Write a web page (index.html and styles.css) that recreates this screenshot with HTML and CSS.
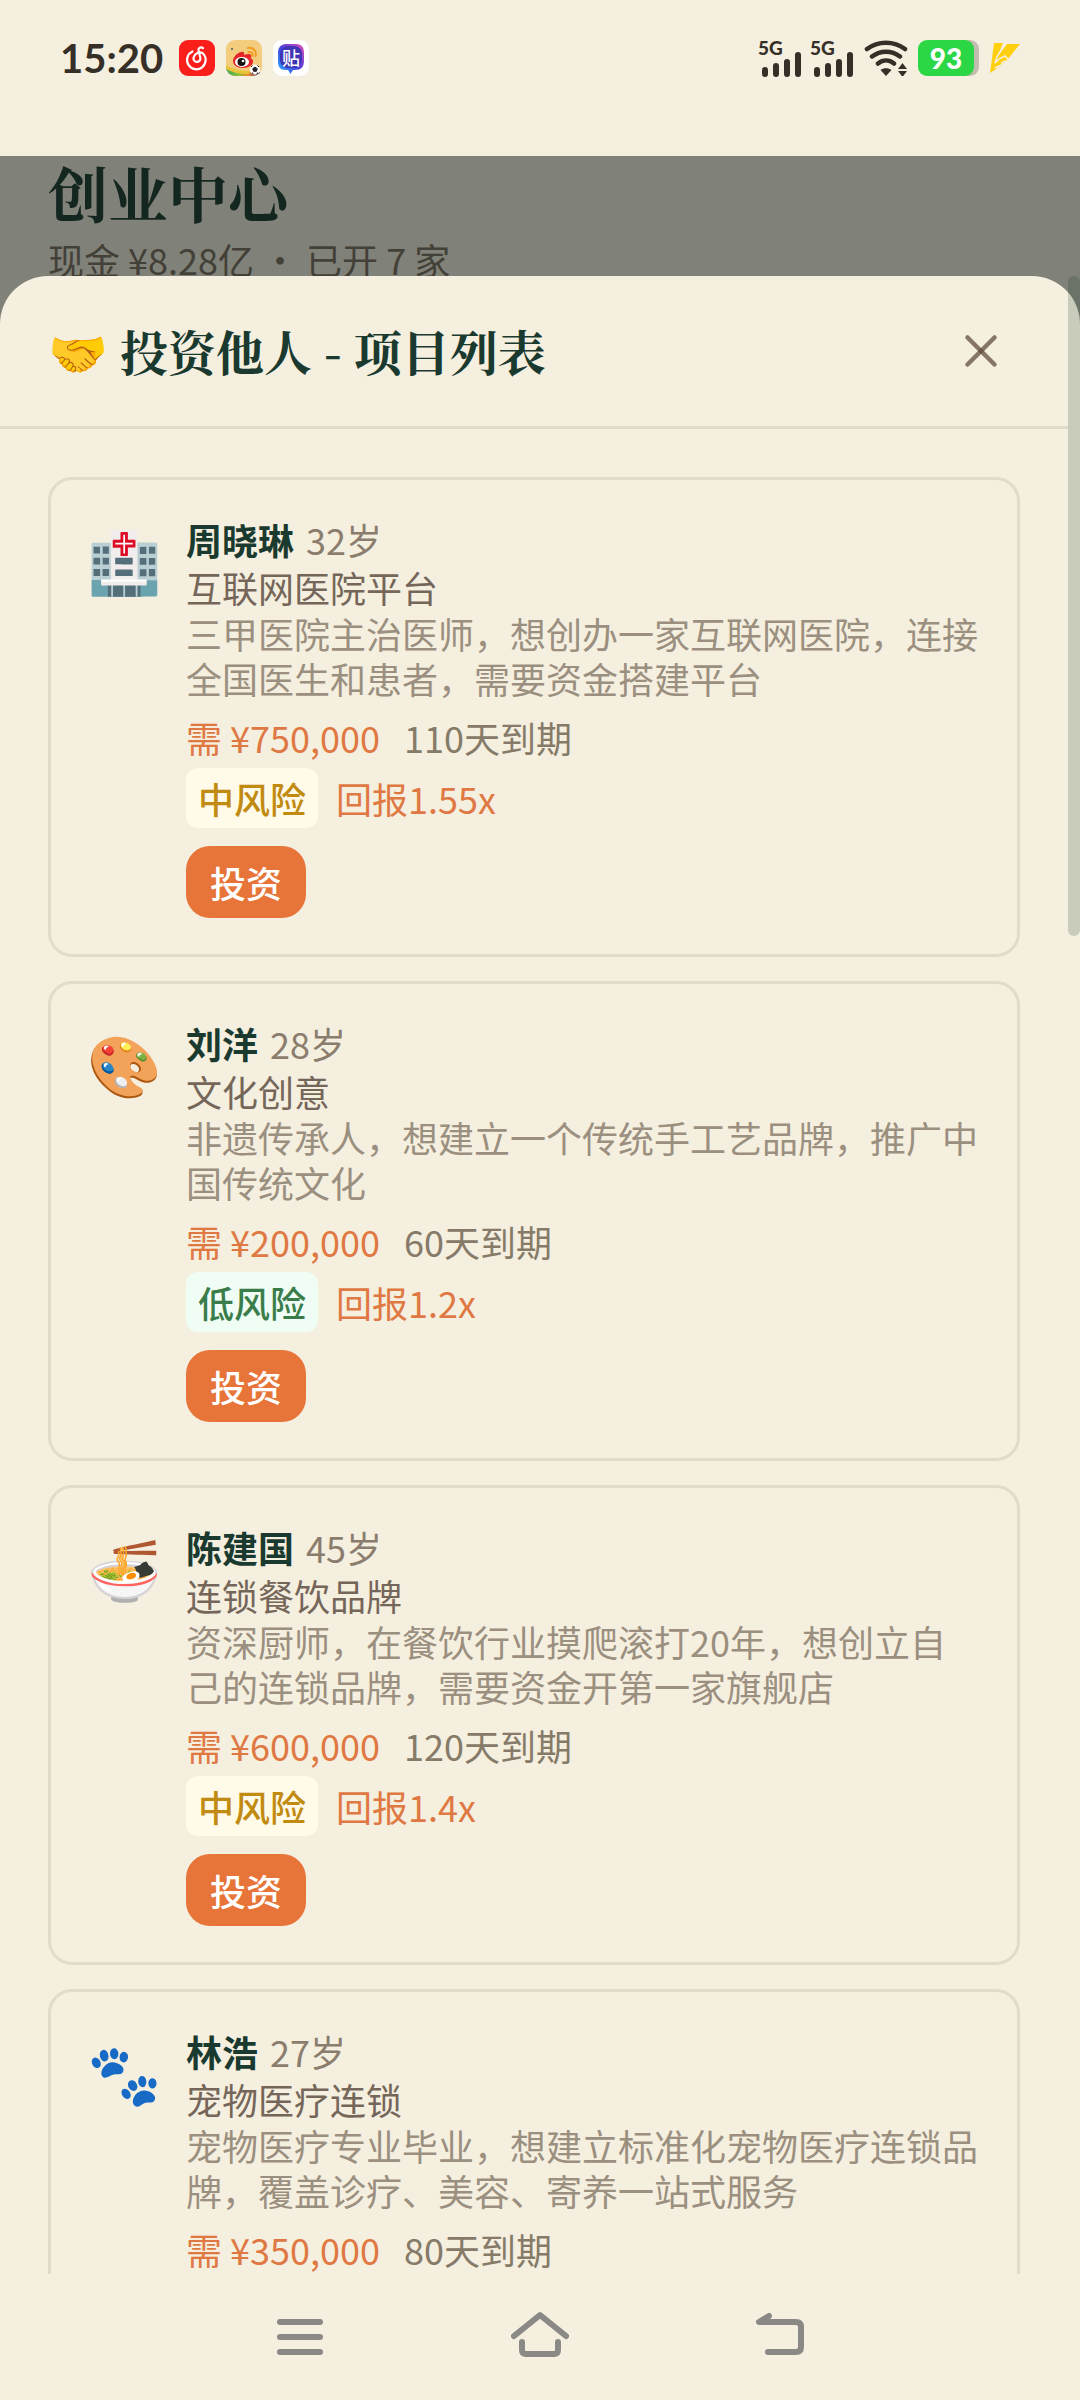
FILE: index.html
```html
<!DOCTYPE html>
<html lang="zh-CN">
<head>
    <meta charset="UTF-8">
    <meta name="viewport" content="width=device-width, initial-scale=1.0">
    <title>创业中心</title>
    <link rel="stylesheet" href="styles.css">
</head>
<body>
    <div class="status-bar">
        <div class="status-left">
            <span class="clock">15:20</span>
            <svg class="app-icon" viewBox="0 0 36 36">
                <rect width="36" height="36" rx="9" fill="#fb1f1c"/>
                <path d="M13.500 11.500A9.300 9.300 0 1 0 23.500 13C21 11.500 16.500 12.500 15 16.500A3.500 3.500 0 1 0 21.300 17.500L19.500 10.500C19 8 22 6.500 24 8.200" fill="none" stroke="#fff" stroke-width="2.200" stroke-linecap="round" stroke-linejoin="round"/>
            </svg>
            <svg class="app-icon" viewBox="0 0 36 36">
                <defs>
                    <clipPath id="weiboClip"><rect width="36" height="36" rx="9"/></clipPath>
                    <linearGradient id="weiboRainbow"><stop offset="0" stop-color="#3aa55b"/><stop offset=".35" stop-color="#8bbf3c"/><stop offset=".6" stop-color="#f08b2b"/><stop offset="1" stop-color="#3a2f86"/></linearGradient>
                </defs>
                <g clip-path="url(#weiboClip)">
                    <rect width="36" height="36" fill="#f4cc7d"/>
                    <path d="M0 27c7 4 16 6 36 5v5H0z" fill="url(#weiboRainbow)"/>
                    <path d="M0 25c7 5 15 6 24 6l-1 3C13 34 5 32 0 29z" fill="#e9c437"/>
                </g>
                <path d="M7 21c0-5 7-10 10-9 2 .500 1 3 1 3s5-2.500 7 0c1 1.500-.500 3-.500 3s3 1 2.500 4c-.500 4-6 6-10.500 6C11 28 7 25 7 21z" fill="#e6262a"/>
                <ellipse cx="16" cy="22" rx="7" ry="5" fill="#fff"/>
                <circle cx="15.500" cy="22" r="4" fill="#15110f"/>
                <circle cx="17" cy="21" r="1.300" fill="#fff"/>
                <circle cx="6" cy="9" r="1" fill="#4b5a7c"/>
                <path d="M22 8c5-1 9 3 7.500 8M22.500 12c2.500-.500 4.500 1 3.800 4" fill="none" stroke="#f39a22" stroke-width="2" stroke-linecap="round"/>
                <circle cx="29" cy="29.500" r="5" fill="#fff"/>
                <path d="M29 27l2.300 1.700-.900 2.600h-2.800l-.900-2.600zM25 27l1.500-1.500M33 27l-1.500-1.500M27 34l-.500-1.500M31 34l.500-1.500" fill="#222" stroke="#222" stroke-width="1"/>
            </svg>
            <span class="app-icon tieba">
                <svg viewBox="0 0 36 36">
                    <defs><linearGradient id="tiebaRing" x1="0" y1="1" x2="1" y2="0"><stop offset="0" stop-color="#22b5ff"/><stop offset=".5" stop-color="#4a3fe0"/><stop offset="1" stop-color="#e64fb4"/></linearGradient></defs>
                    <rect width="36" height="36" rx="9" fill="#fff"/>
                    <path d="M13 4h10c6 0 8 3.500 8 9v8c0 6-3 9-9 9h-2l-2.500 4-2.500-4h-2c-6 0-8-3-8-9v-8c0-5.500 3-9 8-9z" fill="url(#tiebaRing)"/>
                    <rect x="7" y="6" width="22" height="22" rx="8" fill="#3f36b5"/>
                </svg>
                <span class="tieba-text">贴</span>
            </span>
        </div>
        <div class="status-right">
            <div class="signal">
                <span class="signal-type">5G</span>
                <svg viewBox="0 0 42 26"><path d="M5 19v4M16 15v8M27 11v12M38 4v19" stroke="#352f28" stroke-width="6" stroke-linecap="round"/></svg>
            </div>
            <div class="signal">
                <span class="signal-type">5G</span>
                <svg viewBox="0 0 42 26"><path d="M5 19v4M16 15v8M27 11v12M38 4v19" stroke="#352f28" stroke-width="6" stroke-linecap="round"/></svg>
            </div>
            <svg class="wifi" viewBox="0 0 44 36">
                <path d="M3 9C14 0.500 30 0.500 41 9M8 16.500c8.500-6.500 19.500-6.500 28 0M14 23.500c5-4 11-4 16 0" fill="none" stroke="#352f28" stroke-width="4.500" stroke-linecap="round"/>
                <path d="M16.500 30c3-2.500 8-2.500 11 0L22 36zM34 29l4.500-6 4.500 6zM34 31h9l-4.500 6z" fill="#352f28"/>
            </svg>
            <div class="battery"><span>93</span></div>
            <svg class="bolt" viewBox="0 0 30 30"><path d="M4 0h9L8 13l9-12h13L18 16l2 1L0 30z" fill="#ffd010"/><path d="M15 0L7 14l-2 6 4-4 6-3 5 5-15 7M19 17l-8 3" fill="none" stroke="#f5efdf" stroke-width="1.500"/></svg>
        </div>
    </div>

    <div class="app">
        <div class="page-header">
            <h1>创业中心</h1>
            <p>现金 ¥8.28亿 • 已开 7 家</p>
        </div>

        <div class="modal-overlay">
            <div class="modal">
                <div class="modal-header">
                    <h2>🤝 投资他人 - 项目列表</h2>
                    <button class="close-btn" aria-label="关闭">
                        <svg viewBox="0 0 24 24" fill="none" stroke="#5b4636" stroke-opacity=".72" stroke-width="2" stroke-linecap="round"><path d="M18 6L6 18"/><path d="M6 6l12 12"/></svg>
                    </button>
                </div>

                <div class="project-list">
                    <div class="project-card">
                        <div class="project-icon">🏥</div>
                        <div class="project-info">
                            <div class="person"><strong>周晓琳</strong><span>32岁</span></div>
                            <div class="project-name">互联网医院平台</div>
                            <p class="desc">三甲医院主治医师，想创办一家互联网医院，连接全国医生和患者，需要资金搭建平台</p>
                            <div class="funding"><span class="need">需 ¥750,000</span><span class="days">110天到期</span></div>
                            <div class="risk-row"><span class="risk medium">中风险</span><span class="return">回报1.55x</span></div>
                            <button class="invest-btn">投资</button>
                        </div>
                    </div>

                    <div class="project-card">
                        <div class="project-icon">🎨</div>
                        <div class="project-info">
                            <div class="person"><strong>刘洋</strong><span>28岁</span></div>
                            <div class="project-name">文化创意</div>
                            <p class="desc">非遗传承人，想建立一个传统手工艺品牌，推广中国传统文化</p>
                            <div class="funding"><span class="need">需 ¥200,000</span><span class="days">60天到期</span></div>
                            <div class="risk-row"><span class="risk low">低风险</span><span class="return">回报1.2x</span></div>
                            <button class="invest-btn">投资</button>
                        </div>
                    </div>

                    <div class="project-card">
                        <div class="project-icon">🍜</div>
                        <div class="project-info">
                            <div class="person"><strong>陈建国</strong><span>45岁</span></div>
                            <div class="project-name">连锁餐饮品牌</div>
                            <p class="desc">资深厨师，在餐饮行业摸爬滚打20年，想创立自己的连锁品牌，需要资金开第一家旗舰店</p>
                            <div class="funding"><span class="need">需 ¥600,000</span><span class="days">120天到期</span></div>
                            <div class="risk-row"><span class="risk medium">中风险</span><span class="return">回报1.4x</span></div>
                            <button class="invest-btn">投资</button>
                        </div>
                    </div>

                    <div class="project-card">
                        <div class="project-icon">🐾</div>
                        <div class="project-info">
                            <div class="person"><strong>林浩</strong><span>27岁</span></div>
                            <div class="project-name">宠物医疗连锁</div>
                            <p class="desc">宠物医疗专业毕业，想建立标准化宠物医疗连锁品牌，覆盖诊疗、美容、寄养一站式服务</p>
                            <div class="funding"><span class="need">需 ¥350,000</span><span class="days">80天到期</span></div>
                        </div>
                    </div>
                </div>
            </div>
            <div class="scroll-thumb"></div>
        </div>
    </div>

    <div class="nav-bar">
        <button aria-label="菜单"><svg viewBox="0 0 60 60"><path d="M10 18h40M10 33h40M10 48h40"/></svg></button>
        <button aria-label="主页"><svg viewBox="0 0 60 60"><path d="M4 33L30 12l26 21M12 39v8q0 4 4 4h28q4 0 4-4v-8" transform="translate(0 -1)"/></svg></button>
        <button aria-label="返回"><svg viewBox="0 0 60 60"><path d="M19 12L9 18h37q5 0 5 5v20q0 5-5 5H18"/></svg></button>
    </div>
</body>
</html>
```
FILE: styles.css
```css
* {
    margin: 0;
    padding: 0;
    box-sizing: border-box;
}
body {
    display: flex;
    flex-direction: column;
    height: 100vh;
    overflow: hidden;
    background: #f5efdf;
    font-family: "Noto Sans CJK SC", sans-serif;
    font-size: 36px;
    color: #1b3a2f;
}
button {
    border: none;
    background: none;
    font-family: inherit;
    cursor: pointer;
}
svg {
    display: block;
}

/* Status bar */
.status-bar {
    display: flex;
    justify-content: space-between;
    height: 156px;
    padding: 40px 60px 0;
    flex-shrink: 0;
}
.status-left,
.status-right {
    display: flex;
    align-items: center;
    height: 36px;
    color: #352f28;
}
.status-left {
    gap: 11px;
}
.status-right {
    gap: 10px;
}
.clock {
    font-family: Lato, sans-serif;
    font-size: 40px;
    font-weight: 700;
    line-height: 36px;
    margin-right: 5px;
}
.app-icon {
    width: 36px;
    height: 36px;
}
.tieba {
    position: relative;
}
.tieba-text {
    position: absolute;
    inset: 0;
    color: #fff;
    font-size: 18px;
    font-weight: 500;
    line-height: 34px;
    text-align: center;
}
.signal {
    position: relative;
    width: 42px;
    height: 36px;
    padding-top: 11px;
}
.signal-type {
    position: absolute;
    top: 0;
    left: -2px;
    font-family: Lato, sans-serif;
    font-size: 19px;
    font-weight: 900;
    line-height: 16px;
}
.wifi {
    width: 44px;
    height: 36px;
}
.battery {
    width: 56px;
    height: 36px;
    border-radius: 9px;
    background: #2bd745;
    box-shadow: 5px 0 0 #c3bdaf;
    color: #fff;
    font-family: Lato, sans-serif;
    font-size: 28px;
    font-weight: 900;
    line-height: 36px;
    text-align: center;
}
.bolt {
    width: 30px;
    height: 30px;
    margin-left: 6px;
}

/* Page behind the modal */
.app {
    position: relative;
    flex: 1;
    min-height: 0;
    overflow: hidden;
}
.page-header {
    padding: 0 48px;
}
.page-header h1 {
    font-family: "Noto Serif CJK SC", "Noto Serif SC", "Noto Sans CJK SC", serif;
    font-size: 60px;
    font-weight: 700;
    line-height: 72px;
}
.page-header p {
    font-size: 36px;
    line-height: 62px;
    color: #7b6c5c;
}

/* Modal */
.modal-overlay {
    position: absolute;
    inset: 0;
    padding-top: 120px;
    background: rgba(12, 20, 17, 0.5);
}
.modal {
    display: flex;
    flex-direction: column;
    height: 100%;
    padding-right: 12px;
    border-radius: 48px 48px 0 0;
    background: #f5efdf;
    overflow: hidden;
}
.modal-header {
    display: flex;
    justify-content: space-between;
    align-items: center;
    height: 153px;
    padding: 0 48px;
    border-bottom: 3px solid #e0dacb;
    flex-shrink: 0;
}
.modal-header h2 {
    font-family: "Noto Serif CJK SC", "Noto Serif SC", "Noto Sans CJK SC", serif;
    font-size: 48px;
    font-weight: 700;
    line-height: 60px;
}
.close-btn {
    padding: 12px;
}
.close-btn svg {
    width: 54px;
    height: 54px;
}
.scroll-thumb {
    position: absolute;
    top: 120px;
    right: 0;
    width: 12px;
    height: 660px;
    border-radius: 6px;
    background: rgba(27, 58, 47, 0.2);
}

/* Project cards */
.project-list {
    display: flex;
    flex-direction: column;
    gap: 24px;
    padding: 48px;
    min-height: 0;
    overflow: hidden;
}
.project-card {
    display: flex;
    gap: 24px;
    min-height: 480px;
    padding: 36px;
    border: 3px solid #e0dccb;
    border-radius: 24px;
    flex-shrink: 0;
}
.project-icon {
    width: 75px;
    font-size: 60px;
    line-height: 84px;
    flex-shrink: 0;
}
.project-info {
    flex: 1;
    min-width: 0;
}
.person {
    display: flex;
    gap: 12px;
    line-height: 47px;
}
.person span {
    color: #8b7d6d;
}
.project-name {
    line-height: 48px;
    color: #75665a;
}
.desc {
    line-height: 45px;
    margin-bottom: 9px;
    color: #9b8f7f;
}
.funding {
    display: flex;
    gap: 24px;
    line-height: 54px;
}
.need,
.return {
    color: #df7842;
}
.days {
    color: #867a68;
}
.risk-row {
    display: flex;
    align-items: center;
    gap: 18px;
    margin-top: 4px;
}
.risk {
    padding: 0 12px;
    border-radius: 12px;
    font-weight: 500;
    line-height: 60px;
}
.risk.medium {
    background: #fffbe8;
    color: #c18a10;
}
.risk.low {
    background: #effdf5;
    color: #3b7d4a;
}
.invest-btn {
    display: block;
    margin-top: 18px;
    padding: 0 24px;
    border-radius: 24px;
    background: #e77438;
    color: #fff;
    font-size: 36px;
    font-weight: 500;
    line-height: 72px;
}

/* System navigation */
.nav-bar {
    display: flex;
    justify-content: center;
    gap: 180px;
    height: 126px;
    padding-top: 30px;
    flex-shrink: 0;
}
.nav-bar button {
    width: 60px;
    height: 60px;
}
.nav-bar svg {
    width: 60px;
    height: 60px;
    fill: none;
    stroke: #8a8986;
    stroke-width: 6;
    stroke-linecap: round;
    stroke-linejoin: round;
}
```
